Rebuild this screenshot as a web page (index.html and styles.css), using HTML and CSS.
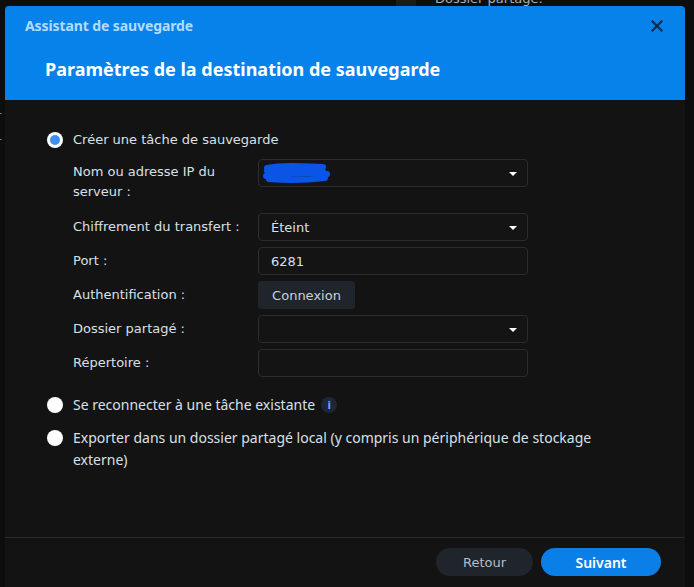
FILE: index.html
```html
<!DOCTYPE html>
<html lang="fr">
<head>
<meta charset="utf-8">
<link rel="stylesheet" href="styles.css">
</head>
<body>
<div class="desktop">
  <div class="bg-window">
    <div class="bg-block"></div>
    <div class="bg-text">Dossier partagé:</div>
    <div class="bg-r r1">r</div>
    <div class="bg-r r2">r</div>
  </div>

  <div class="dialog">
    <div class="header">
      <div class="header-top">
        <span class="app-title">Assistant de sauvegarde</span>
        <svg class="close" width="12" height="12" viewBox="0 0 12 12"><path d="M1.5 1.5 L10.5 10.5 M10.5 1.5 L1.5 10.5" stroke="#0d2b4b" stroke-width="2.2" stroke-linecap="square"/></svg>
      </div>
      <h1 class="step-title">Paramètres de la destination de sauvegarde</h1>
    </div>

    <div class="body">
      <label class="radio-row">
        <span class="radio checked"></span>
        <span class="radio-label">Créer une tâche de sauvegarde</span>
      </label>

      <div class="form">
        <div class="row tall">
          <div class="label">Nom ou adresse IP du<br>serveur :</div>
          <div class="field select">
            <svg class="scribble" width="70" height="22" viewBox="0 0 70 22"><path d="M6 6 C20 3 40 4 62 5 M5 14 C25 11 45 11 66 12 M8 17 C28 19 48 18 64 16 M6 9 C30 8 50 9 62 10" stroke="#0a55e6" stroke-width="6" fill="none" stroke-linecap="round"/></svg>
            <span class="caret"></span>
          </div>
        </div>
        <div class="row">
          <div class="label">Chiffrement du transfert :</div>
          <div class="field select"><span class="value">Éteint</span><span class="caret"></span></div>
        </div>
        <div class="row">
          <div class="label">Port :</div>
          <div class="field"><span class="value">6281</span></div>
        </div>
        <div class="row">
          <div class="label">Authentification :</div>
          <button class="btn-connect">Connexion</button>
        </div>
        <div class="row">
          <div class="label">Dossier partagé :</div>
          <div class="field select"><span class="caret"></span></div>
        </div>
        <div class="row">
          <div class="label">Répertoire :</div>
          <div class="field"></div>
        </div>
      </div>

      <label class="radio-row second">
        <span class="radio"></span>
        <span class="radio-label alt">Se reconnecter à une tâche existante</span>
        <span class="info">i</span>
      </label>

      <label class="radio-row third">
        <span class="radio"></span>
        <span class="radio-label alt">Exporter dans un dossier partagé local (y compris un périphérique de stockage externe)</span>
      </label>
    </div>

    <div class="footer">
      <button class="btn btn-back">Retour</button>
      <button class="btn btn-next">Suivant</button>
    </div>
  </div>
</div>
</body>
</html>
```

FILE: styles.css
```css
html, body {
  margin: 0;
  padding: 0;
}
body {
  background: #0d0d0d;
  font-family: "DejaVu Sans", Verdana, sans-serif;
  font-size: 13px;
  color: #d9e0e7;
  width: 694px;
  height: 587px;
  overflow: hidden;
}
.desktop {
  position: relative;
  width: 694px;
  height: 587px;
  overflow: hidden;
}
.bg-window {
  position: absolute;
  inset: 0;
  background: #0d0d0d;
}
.bg-block {
  position: absolute;
  left: 396px;
  top: 0;
  width: 20px;
  height: 6px;
  background: #1b1b1b;
}
.bg-text {
  position: absolute;
  left: 435px;
  top: -9px;
  color: #a9b0b7;
  font-size: 13px;
}
.bg-r {
  position: absolute;
  left: -4px;
  color: #9aa2aa;
  font-size: 13px;
}
.r1 { top: 108px; }
.r2 { top: 134px; }

.dialog {
  position: absolute;
  left: 5px;
  top: 6px;
  width: 680px;
  height: 600px;
  background: #131313;
  border-radius: 4px 4px 0 0;
  display: flex;
  flex-direction: column;
  overflow: hidden;
}
.header {
  background: #0782ea;
  height: 94px;
  box-sizing: border-box;
  padding: 11px 22px 0 20px;
}
.header-top {
  display: flex;
  justify-content: space-between;
  align-items: center;
  height: 16px;
}
.app-title {
  font-family: "Noto Sans", "DejaVu Sans", sans-serif;
  font-weight: 700;
  font-size: 14px;
  color: #b3dbff;
  letter-spacing: -0.1px;
}
.close {
  margin-top: 2px;
}
.step-title {
  margin: 24px 0 0 20px;
  font-family: "Noto Sans", "DejaVu Sans", sans-serif;
  font-weight: 700;
  font-size: 18px;
  line-height: 24px;
  color: #ffffff;
}

.body {
  height: 438px;
  box-sizing: border-box;
  padding: 30px 0 0 42px;
  border-bottom: 1px solid #2a2a2a;
}
.radio-row {
  display: flex;
  align-items: center;
  height: 20px;
}
.radio {
  width: 16px;
  height: 16px;
  border-radius: 50%;
  background: #ffffff;
  flex: none;
  box-sizing: border-box;
  position: relative;
}
.radio.checked::after {
  content: "";
  position: absolute;
  left: 3px;
  top: 3px;
  width: 10px;
  height: 10px;
  border-radius: 50%;
  background: #3c8ff0;
}
.radio-label {
  margin-left: 10px;
  line-height: 20px;
}
.radio-label.alt {
  font-family: "Noto Sans", "DejaVu Sans", sans-serif;
  font-size: 14px;
}
.form {
  margin: 9px 0 0 26px;
  display: flex;
  flex-direction: column;
  gap: 6px;
}
.row {
  display: flex;
  align-items: center;
  height: 28px;
}
.row.tall {
  height: 48px;
  align-items: flex-start;
}
.row.tall .label {
  padding-top: 3px;
}
.label {
  width: 185px;
  flex: none;
  line-height: 20px;
  color: #d9e0e7;
}
.field {
  width: 270px;
  height: 28px;
  box-sizing: border-box;
  border: 1px solid #2c2c2c;
  border-radius: 4px;
  background: #141414;
  display: flex;
  align-items: center;
  padding: 0 12px;
  position: relative;
}
.value {
  color: #d9e0e7;
}
.caret {
  position: absolute;
  right: 10px;
  top: 12px;
  width: 0;
  height: 0;
  border-left: 4px solid transparent;
  border-right: 4px solid transparent;
  border-top: 4px solid #ffffff;
}
.scribble {
  position: absolute;
  left: 2px;
  top: 2px;
}
.btn-connect {
  font-family: "DejaVu Sans", Verdana, sans-serif;
  font-size: 13px;
  color: #c9d2db;
  background: #1f252b;
  border: none;
  border-radius: 3px;
  height: 28px;
  width: 97px;
  padding: 0;
}
.radio-row.second {
  margin-top: 18px;
}
.info {
  width: 16px;
  height: 16px;
  border-radius: 50%;
  background: #1e2638;
  color: #6ea4ff;
  font-size: 10px;
  font-weight: 700;
  display: flex;
  align-items: center;
  justify-content: center;
  margin-left: 6px;
  font-family: "DejaVu Sans", sans-serif;
}
.radio-row.third {
  margin-top: 13px;
  align-items: flex-start;
  height: auto;
  width: 580px;
}
.radio-row.third .radio {
  margin-top: 2px;
}
.radio-row.third .radio-label {
  line-height: 22px;
  margin-top: -1px;
}

.footer {
  display: flex;
  justify-content: flex-end;
  gap: 8px;
  padding: 10px 24px 0 0;
}
.btn {
  height: 28px;
  border: none;
  border-radius: 14px;
  font-family: "DejaVu Sans", Verdana, sans-serif;
  font-size: 13px;
  padding: 0;
}
.btn-back {
  width: 97px;
  background: #1f252b;
  color: #b4bec8;
}
.btn-next {
  width: 120px;
  background: #0a7fe8;
  color: #ffffff;
  font-family: "Noto Sans", "DejaVu Sans", sans-serif;
  font-size: 14px;
  font-weight: 600;
}
```
